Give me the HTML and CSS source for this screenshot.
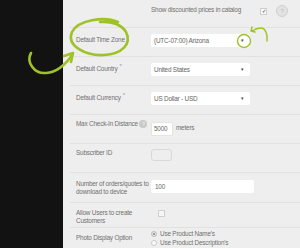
FILE: index.html
```html
<!DOCTYPE html>
<html lang="en">
<head>
    <meta charset="UTF-8">
    <meta name="viewport" content="width=device-width, initial-scale=1.0">
    <title>Settings</title>
    <link rel="stylesheet" href="styles.css">
</head>
<body>

<div class="page">
    <div class="sidebar"></div>

    <form class="settings">
        <div class="row row-top">
            <div class="label"></div>
            <div class="control">
                <span class="text">Show discounted prices in catalog</span>
                <span class="check checked">&#10003;</span>
                <span class="help big">?</span>
            </div>
        </div>

        <div class="row">
            <div class="label">Default Time Zone<sup>*</sup></div>
            <div class="control">
                <div class="select">(UTC-07:00) Arizona<span class="arrow">&#9662;</span></div>
            </div>
        </div>

        <div class="row">
            <div class="label">Default Country<sup>*</sup></div>
            <div class="control">
                <div class="select">United States<span class="arrow">&#9662;</span></div>
            </div>
        </div>

        <div class="row">
            <div class="label">Default Currency<sup>*</sup></div>
            <div class="control">
                <div class="select">US Dollar - USD<span class="arrow">&#9662;</span></div>
            </div>
        </div>

        <div class="row">
            <div class="label nowrap">Max Check-In Distance <span class="help">?</span></div>
            <div class="control">
                <div class="input short">5000</div>
                <span class="text">meters</span>
            </div>
        </div>

        <div class="row">
            <div class="label">Subscriber ID</div>
            <div class="control">
                <div class="input tiny"></div>
            </div>
        </div>

        <div class="row row-tall">
            <div class="label">Number of orders/quotes to download to device</div>
            <div class="control">
                <div class="input wide">100</div>
            </div>
        </div>

        <div class="row row-short">
            <div class="label">Allow Users to create Customers</div>
            <div class="control">
                <span class="check small"></span>
            </div>
        </div>

        <div class="row row-last">
            <div class="label">Photo Display Option</div>
            <div class="control radios">
                <label class="radio"><span class="dot on"></span>Use Product Name's</label>
                <label class="radio"><span class="dot"></span>Use Product Description's</label>
            </div>
        </div>
    </form>
</div>

<!-- hand drawn annotations on top of the screenshot -->
<svg class="marks" width="300" height="248" viewBox="0 0 300 248">
    <path d="M118 22 C 104 16, 78 20, 72 32 C 66 46, 86 56, 104 55 C 122 54, 132 44, 126 32 C 122 25, 112 21, 100 22" />
    <path d="M31 53 C 26 62, 34 74, 46 73 C 58 72, 66 64, 72 55" />
    <path d="M64 56 L 73 53 L 71 62" />
    <circle class="thin" cx="244" cy="41" r="6.5" />
    <path class="thin" d="M267 41 C 268 34, 265 28, 261 28 C 258 28, 255 29, 252 31" />
    <path class="thin" d="M252 27 L 251 31 L 255 32" />
</svg>

</body>
</html>
```

FILE: styles.css
```css
body {
    margin: 0;
    padding: 0;
    background-color: #121212;
    font-family: 'Liberation Sans', Arial, sans-serif;
    font-size: 6.4px;
    letter-spacing: -0.2px;
    color: #707070;
}

.page {
    display: flex;
    width: 300px;
    height: 248px;
    overflow: hidden;
}

.sidebar {
    width: 63px;
    flex-shrink: 0;
    background-color: #121212;
}

.settings {
    flex: 1;
    background-color: #eeeeee;
    padding-left: 7px;
}

.row {
    display: grid;
    grid-template-columns: 81px 1fr;
    align-items: start;
    height: 29px;
    box-sizing: border-box;
    padding-top: 5px;
    border-bottom: 1px solid #e1e1e1;
}

.row-top {
    height: 28px;
    padding-top: 3px;
}

.row-tall {
    height: 30px;
    padding-top: 7px;
}

.row-short {
    height: 25px;
    padding-top: 6px;
}

.row-last {
    height: 30px;
    border-bottom: none;
    padding-top: 1px;
}

.label {
    padding-left: 6px;
    line-height: 8px;
    padding-right: 1px;
}

.row-last .label {
    padding-top: 5px;
}

.nowrap {
    white-space: nowrap;
}

.label sup {
    font-size: 6px;
    color: #999;
    margin-left: 2px;
    vertical-align: 3px;
}

.control {
    display: flex;
    align-items: center;
    gap: 3px;
    white-space: nowrap;
}

.text {
    line-height: 10px;
}

.select {
    position: relative;
    width: 99px;
    height: 13px;
    line-height: 13px;
    margin-top: 1px;
    padding-left: 3px;
    box-sizing: border-box;
    background-color: #fff;
    border-radius: 2px;
    color: #666;
}

.arrow {
    position: absolute;
    right: 6px;
    top: 0;
    font-size: 5px;
    color: #444;
}

.input {
    height: 14px;
    line-height: 12px;
    padding-left: 2px;
    box-sizing: border-box;
    background-color: #fff;
    border: 1px solid #e4e4e4;
    border-radius: 2px;
    color: #666;
}

.short {
    width: 22px;
    margin-top: 2px;
}

.tiny {
    width: 21px;
    height: 12px;
    margin-top: 0;
    background-color: #eeeeee;
    border-color: #d8d8d8;
    border-radius: 3px;
}

.wide {
    width: 103px;
    height: 13px;
    line-height: 13px;
    margin-top: 0;
    border: none;
    padding-left: 4px;
}

.check {
    display: inline-block;
    width: 5px;
    height: 5px;
    border: 1px solid #cfcfcf;
    background-color: #f6f6f6;
    font-size: 5px;
    line-height: 5px;
    text-align: center;
    color: #333;
}

.checked {
    margin-left: 16px;
    margin-top: 2px;
}

.small {
    margin-left: 7px;
    margin-top: 1px;
}

.help {
    display: inline-block;
    width: 8px;
    height: 8px;
    border-radius: 50%;
    background-color: #c9c9c9;
    color: #eee;
    font-size: 6px;
    line-height: 8px;
    text-align: center;
    vertical-align: middle;
}

.help.big {
    width: 10px;
    height: 10px;
    line-height: 10px;
    margin-left: 6px;
    margin-top: 2px;
    background-color: #e2e2e2;
    border: 1px solid #cfcfcf;
    color: #bbb;
}

.radios {
    flex-direction: column;
    align-items: flex-start;
    gap: 0;
}

.radio {
    display: flex;
    align-items: center;
    gap: 3px;
    line-height: 9px;
}

.dot {
    width: 4px;
    height: 4px;
    border-radius: 50%;
    border: 1px solid #c8c8c8;
    background-color: #fff;
}

.dot.on {
    background-color: #777;
    box-shadow: inset 0 0 0 1px #fff;
}

.marks {
    position: absolute;
    top: 0;
    left: 0;
    pointer-events: none;
}

.marks path,
.marks circle {
    fill: none;
    stroke: #9fc226;
    stroke-width: 2.6;
    stroke-linecap: round;
    stroke-linejoin: round;
}

.marks .thin {
    stroke-width: 1.4;
}
```
